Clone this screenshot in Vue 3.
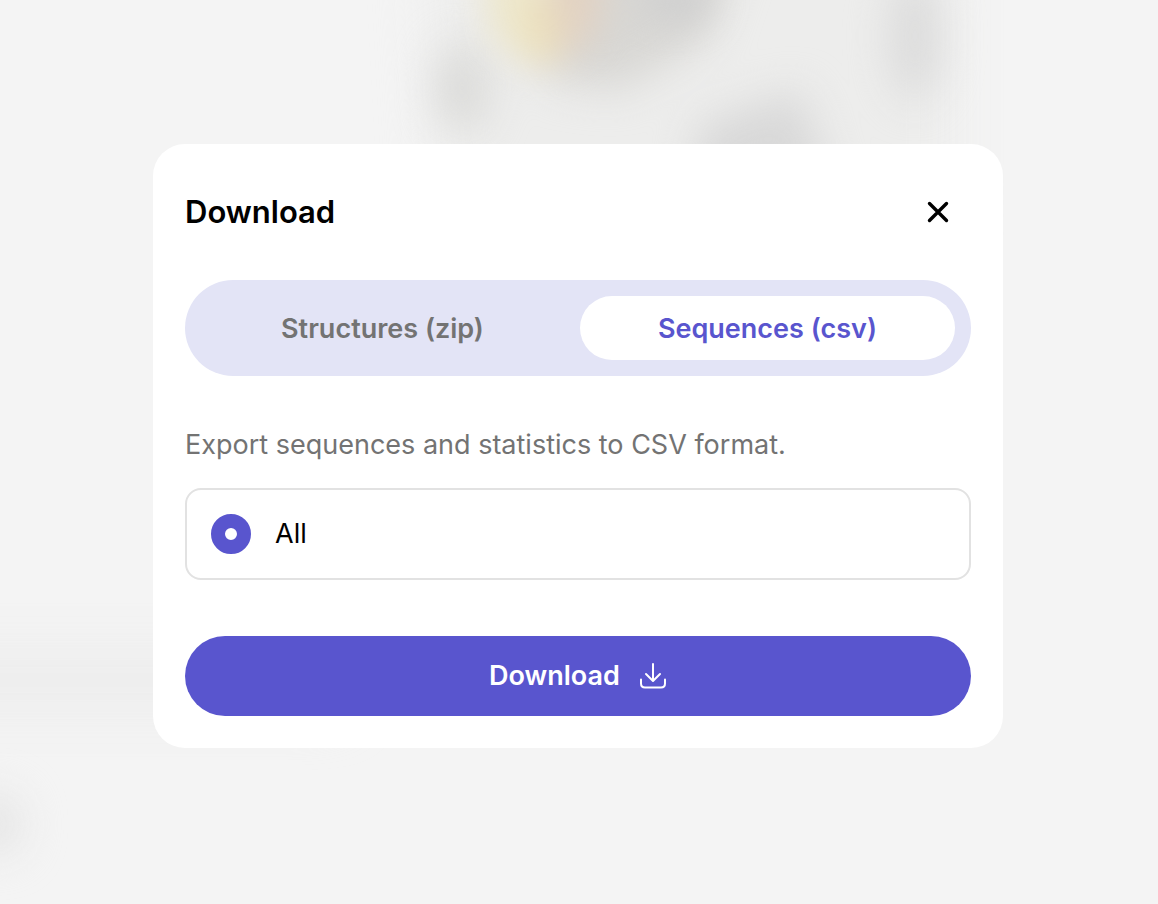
<script setup>
import { ref } from 'vue'

const tabs = [
  { id: 'structures', label: 'Structures (zip)' },
  { id: 'sequences', label: 'Sequences (csv)' },
]
const active = ref('sequences')
const scope = ref('all')
</script>

<template>
  <main class="page">
    <svg class="backdrop" viewBox="0 0 1158 904" preserveAspectRatio="xMidYMin slice" aria-hidden="true">
      <defs>
        <filter id="soft" filterUnits="userSpaceOnUse" x="-200" y="-200" width="1558" height="1304" color-interpolation-filters="sRGB">
          <feGaussianBlur stdDeviation="21" />
        </filter>
        <filter id="tight" filterUnits="userSpaceOnUse" x="-200" y="-200" width="1558" height="1304" color-interpolation-filters="sRGB">
          <feGaussianBlur stdDeviation="17" />
        </filter>
        <filter id="wide" filterUnits="userSpaceOnUse" x="-200" y="-200" width="1558" height="1304" color-interpolation-filters="sRGB">
          <feGaussianBlur stdDeviation="26" />
        </filter>
      </defs>
      <g filter="url(#wide)">
        <path d="M425 -80H955V200H440Z" fill="#ededec" />
        <rect x="-80" y="652" width="420" height="56" fill="#ececec" />
      </g>
      <g filter="url(#soft)">
        <ellipse cx="462" cy="88" rx="25" ry="45" fill="#d9d9d7" />
        <path d="M530 -60H738L705 40L620 90L550 80Z" fill="#d8d7d4" />
        <path d="M700 125L800 90L835 200H690Z" fill="#d8d8d8" />
        <ellipse cx="915" cy="36" rx="24" ry="66" fill="#dadada" />
        <ellipse cx="-6" cy="824" rx="28" ry="30" fill="#e4e4e4" />
      </g>
      <g filter="url(#tight)">
        <path d="M480 -60H535L560 62L528 66L490 35Z" fill="#ede7cc" />
        <path d="M552 -50H608L596 34L548 66L534 60Z" fill="#e2d2c2" />
        <path d="M522 0L552 -5L558 64L530 62Z" fill="#ece0bc" />
        <ellipse cx="678" cy="-2" rx="34" ry="26" fill="#d0d0d0" />
      </g>
    </svg>

    <section class="dialog" role="dialog" aria-labelledby="dialog-title">
      <header class="header">
        <h1 id="dialog-title" class="title">Download</h1>
        <button class="close" type="button" aria-label="Close">
          <svg width="24" height="24" viewBox="0 0 24 24" fill="none" stroke="currentColor" stroke-width="3.4" stroke-linecap="round">
            <path d="M3.5 3.5L20.5 20.5M20.5 3.5L3.5 20.5" />
          </svg>
        </button>
      </header>

      <div class="tabs" role="tablist">
        <button
          v-for="tab in tabs"
          :key="tab.id"
          type="button"
          role="tab"
          class="tab"
          :class="{ selected: active === tab.id }"
          :aria-selected="active === tab.id"
          @click="active = tab.id"
        >{{ tab.label }}</button>
      </div>

      <p class="description">Export sequences and statistics to CSV format.</p>

      <label class="option" for="scope-all">
        <input id="scope-all" v-model="scope" class="radio" type="radio" name="scope" value="all" />
        <span>All</span>
      </label>

      <button class="download" type="button">
        <span>Download</span>
        <svg width="28" height="28" viewBox="0 0 28 28" fill="none" stroke="currentColor" stroke-width="2" stroke-linecap="round" stroke-linejoin="round" aria-hidden="true">
          <path d="M14 2V18.5M7 12L14 19L21 12" />
          <path d="M2 17.5V21.5Q2 25.5 6 25.5H22Q26 25.5 26 21.5V17.5" />
        </svg>
      </button>
    </section>
  </main>
</template>

<style>
body {
  margin: 0;
  background: #f4f4f4;
}
</style>

<style scoped>
.page {
  position: relative;
  box-sizing: border-box;
  min-height: 100vh;
  padding: 0 18px 12px 16px;
  display: flex;
  align-items: center;
  justify-content: center;
  overflow: hidden;
  background: #f4f4f4;
  font-family: Inter, "Liberation Sans", sans-serif;
  color: #000;
}

.backdrop {
  position: absolute;
  inset: 0;
  width: 100%;
  height: 100%;
}

.dialog {
  position: relative;
  box-sizing: border-box;
  width: 100%;
  max-width: 850px;
  padding: 32px;
  border-radius: 32px;
  background: #fff;
}

.header {
  display: flex;
  align-items: center;
  justify-content: space-between;
  height: 72px;
  margin-bottom: 32px;
}

.title {
  margin: 0;
  font-size: 31px;
  line-height: 40px;
  font-weight: 600;
}

button {
  border: 0;
  font-family: inherit;
  cursor: pointer;
}

.close {
  display: flex;
  align-items: center;
  justify-content: center;
  width: 66px;
  height: 64px;
  padding: 0;
  background: transparent;
  color: #000;
}

.tabs {
  display: grid;
  grid-template-columns: 121fr 125fr;
  gap: 16px;
  padding: 16px;
  border-radius: 48px;
  background: #e3e4f6;
}

.tab {
  height: 64px;
  padding: 2px 0 0;
  border-radius: 32px;
  background: transparent;
  color: #737373;
  font-size: 27px;
  line-height: 40px;
  font-weight: 600;
}

.tab.selected {
  background: #fff;
  color: #5955ce;
}

.description {
  margin: 49px 0 23px;
  color: #737373;
  font-size: 27px;
  line-height: 40px;
}

.option {
  display: flex;
  align-items: center;
  gap: 24px;
  padding: 24px;
  border: 2px solid #e2e2e2;
  border-radius: 16px;
  font-size: 27px;
  line-height: 40px;
}

.radio {
  appearance: none;
  width: 40px;
  height: 40px;
  margin: 0;
  border: 14px solid #5955ce;
  border-radius: 50%;
  background: #fff;
}

.download {
  display: flex;
  align-items: center;
  justify-content: center;
  gap: 19px;
  width: 100%;
  height: 80px;
  margin-top: 56px;
  padding: 0;
  border-radius: 40px;
  background: #5955ce;
  color: #fff;
  font-size: 27px;
  line-height: 40px;
  font-weight: 600;
}
</style>
